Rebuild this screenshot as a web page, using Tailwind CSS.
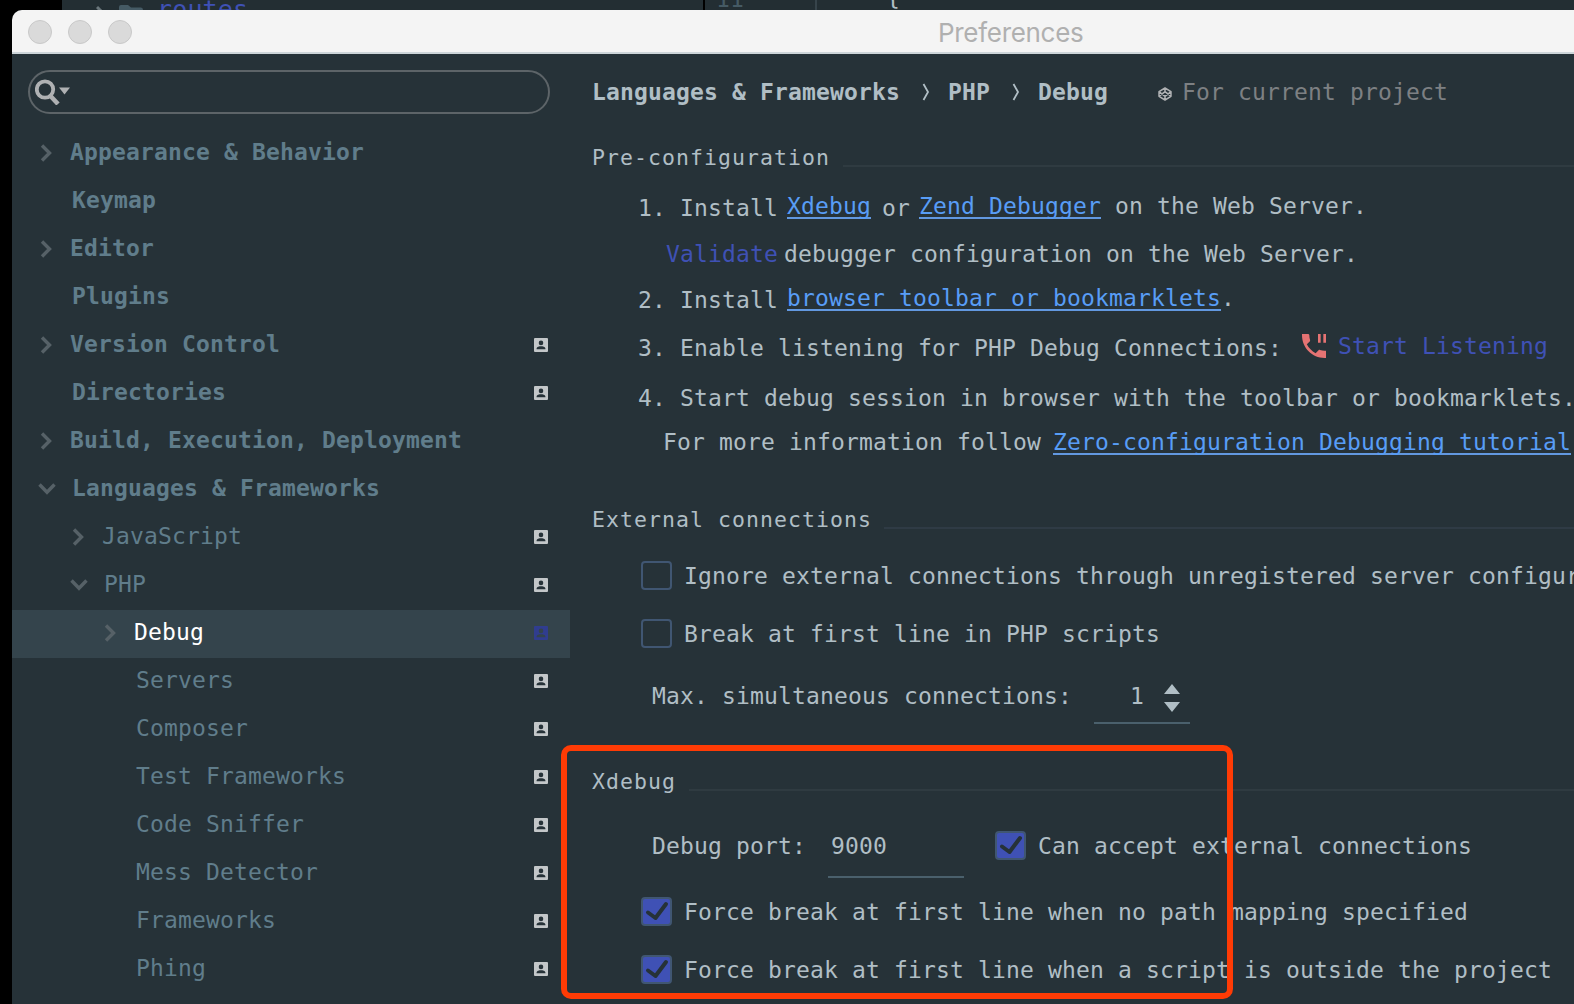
<!DOCTYPE html>
<html lang="en">
<head>
<meta charset="utf-8">
<title>Preferences</title>
<script src="https://cdn.jsdelivr.net/npm/@tailwindcss/browser@4"></script>
</head>
<body class="relative h-[1004px] w-[1574px] overflow-hidden bg-black font-['DejaVu_Sans_Mono',monospace] text-[23px] leading-7 tracking-[0.153px] text-[#b0bec5]">
<svg class="hidden">
  <symbol id="right" viewBox="0 0 12 18"><path d="M2 1.5 9.5 9 2 16.5" fill="none" stroke="#566167" stroke-width="3.4"/></symbol>
  <symbol id="down" viewBox="0 0 18 12"><path d="M1.5 1.5 9 9.3 16.5 1.5" fill="none" stroke="#566167" stroke-width="3.4"/></symbol>
  <symbol id="badge" viewBox="0 0 14 14"><path fill="currentColor" fill-rule="evenodd" d="M1 0H13Q14 0 14 1V13Q14 14 13 14H1Q0 14 0 13V1Q0 0 1 0ZM7 2.6A2.3 2.3 0 1 0 7 7.2A2.3 2.3 0 1 0 7 2.6ZM2.6 11.2H11.4V10.4C11.4 8.8 8.6 8.2 7 8.2S2.6 8.8 2.6 10.4Z"/></symbol>
  <symbol id="tick" viewBox="0 0 31 29"><rect x="1" y="1" width="29" height="27" rx="3" fill="#3f51b5" stroke="#405672" stroke-width="2"/><path d="M7 15.500 14.500 21 25 7" fill="none" stroke="#263238" stroke-width="4" stroke-linecap="round" stroke-linejoin="round"/></symbol>
</svg>

<!-- Editor behind the dialog -->
<div class="ml-[62px] flex h-[10px] overflow-hidden bg-[#232e33]">
  <svg class="ml-[34px] h-[10px] w-[50px] shrink-0" viewBox="0 0 50 10"><path d="M1 7 6 12" stroke="#6b777c" stroke-width="3"/><path d="M23 10V7Q23 5 25 5H32L35 7.500H45Q47 7.500 47 10Z" fill="#455a64"/></svg>
  <div class="-mt-[4px] ml-[11px] w-[548px] shrink-0 border-r-2 border-black text-[25px] text-[#3f51b5]">routes</div>
  <div class="-mt-[15px] ml-[11px] w-[101px] shrink-0 border-r-2 border-[#37444b] text-[#455a64]">11</div>
  <div class="-mt-[17px] ml-[69px]">{</div>
</div>

<!-- Dialog -->
<div class="ml-3 flex h-[994px] flex-col overflow-hidden rounded-tl-[10px] bg-[#263238]">
  <div class="flex h-[44px] shrink-0 items-center border-b-2 border-[#cdd5d9] bg-[#f4f4f4] pt-[2px]">
    <div class="ml-4 flex gap-4">
      <span class="size-6 rounded-full border border-[#c8c8c8] bg-[#dadada]"></span>
      <span class="size-6 rounded-full border border-[#c8c8c8] bg-[#dadada]"></span>
      <span class="size-6 rounded-full border border-[#c8c8c8] bg-[#dadada]"></span>
    </div>
    <div class="ml-[806px] mt-[2px] font-[Inter,sans-serif] text-[26px] tracking-[-0.3px] text-[#b0b0b0]">Preferences</div>
  </div>

  <div class="flex min-h-0 flex-1">
    <aside class="w-[558px] shrink-0">
      <div class="ml-4 mt-4 flex h-[44px] w-[522px] items-center rounded-[22px] border-2 border-[#5d6468] pl-[5px]">
        <svg class="h-[26px] w-9" viewBox="0 0 36 26"><circle cx="10" cy="10.500" r="8.200" fill="none" stroke="#afb1b3" stroke-width="3.800"/><path d="m15.500 17 7.500 8" stroke="#afb1b3" stroke-width="4.500"/><path d="M24 8.500H35L29.500 15.500Z" fill="#afb1b3"/></svg>
      </div>
      <nav id="tree" class="mt-4 text-[#607d8b]"></nav>
    </aside>

    <main class="flex min-w-0 flex-1 flex-col overflow-hidden whitespace-pre pl-[22px] pt-6 [&>*]:shrink-0">
      <div class="flex h-7 items-center font-bold">
        <span>Languages &amp; Frameworks</span>
        <svg class="ml-[22px] h-[18px] w-2" viewBox="0 0 8 18"><path d="M1.500 1 6 9 1.500 17" fill="none" stroke="#b0bec5" stroke-width="1.800"/></svg>
        <span class="ml-[18px]">PHP</span>
        <svg class="ml-[22px] h-[18px] w-2" viewBox="0 0 8 18"><path d="M1.500 1 6 9 1.500 17" fill="none" stroke="#b0bec5" stroke-width="1.800"/></svg>
        <span class="ml-[18px]">Debug</span>
        <svg class="ml-[50px] mt-[3px] size-[14px]" viewBox="0 0 14 14" fill="none" stroke="#afb1b3" stroke-width="1.500" stroke-linejoin="round"><path d="M7 1 13 4.700V9.300L7 13 1 9.300V4.700ZM7 1V4.700M7 9.300V13M1 4.700 7 9.300 13 4.700M1 9.300 7 4.700 13 9.300"/></svg>
        <span class="ml-[10px] font-normal text-[#7d8083]">For current project</span>
      </div>

      <div class="mt-[38px] flex h-7 text-[21.5px] tracking-[1.056px]"><span>Pre-configuration</span><i class="ml-[13px] mt-[21px] h-0.5 flex-1 bg-[#2f3b41]"></i></div>
      <div class="ml-[46px] mt-5 flex h-[30px]">
        <span class="mt-0.5 w-[149px]">1. Install</span><a class="h-[27px] border-b-2 border-[#6298e0] text-[#589df6]">Xdebug</a><span class="mt-0.5 ml-[11px] w-[37px]">or</span><a class="h-[27px] border-b-2 border-[#6298e0] text-[#589df6]">Zend Debugger</a><span> on the Web Server.</span>
      </div>
      <div class="ml-[74px] mt-[18px] flex h-7"><span class="w-[118px] text-[#3f51b5]">Validate</span><span>debugger configuration on the Web Server.</span></div>
      <div class="ml-[46px] mt-4 flex h-[30px]">
        <span class="mt-0.5 w-[149px]">2. Install</span><a class="h-[27px] border-b-2 border-[#6298e0] text-[#589df6]">browser toolbar or bookmarklets</a><span>.</span>
      </div>
      <div class="ml-[46px] mt-[18px] flex h-[30px]">
        <span class="mt-0.5 w-[664px]">3. Enable listening for PHP Debug Connections:</span>
        <svg class="mt-0.5 size-6 shrink-0" viewBox="3 3 18 18" fill="#e57373"><path d="M20 15.500c-1.250 0-2.450-.2-3.570-.57-.35-.11-.74-.03-1.020.24l-2.200 2.200c-2.830-1.440-5.150-3.750-6.590-6.590l2.200-2.200c.28-.28.36-.67.25-1.020C8.700 6.450 8.500 5.250 8.500 4c0-.55-.45-1-1-1H3v1c0 9.390 7.610 17 17 17h1v-5.500zM19 3v6.500h2V3zM15 3v6.500h2V3z"/></svg>
        <span class="ml-3 text-[#3f51b5]">Start Listening</span>
      </div>
      <div class="ml-[46px] mt-[22px] h-7">4. Start debug session in browser with the toolbar or bookmarklets.</div>
      <div class="ml-[71px] mt-4 flex h-7"><span class="w-[390px]">For more information follow</span><a class="h-[27px] border-b-2 border-[#6298e0] text-[#589df6]">Zero-configuration Debugging tutorial</a></div>

      <div class="mt-[50px] flex h-7 text-[21.5px] tracking-[1.056px]"><span>External connections</span><i class="ml-[12px] mt-[21px] h-0.5 flex-1 bg-[#2f3b45]"></i></div>
      <div class="ml-[49px] mt-[27px] flex h-[29px]"><i class="w-[31px] shrink-0 rounded-[4px] border-2 border-[#405672]"></i><span class="ml-3 mt-px">Ignore external connections through unregistered server configurations</span></div>
      <div class="ml-[49px] mt-[29px] flex h-[29px]"><i class="w-[31px] shrink-0 rounded-[4px] border-2 border-[#405672]"></i><span class="ml-3 mt-px">Break at first line in PHP scripts</span></div>
      <div class="ml-[60px] mt-[34px] flex h-[42px]">
        <span class="w-[442px]">Max. simultaneous connections:</span>
        <div class="flex w-24 border-b-2 border-[#4a606c] pl-9"><span>1</span><svg class="ml-5 mt-0.5 h-7 w-4" viewBox="0 0 16 28" fill="#b0bec5"><path d="M8 0 16 10H0ZM0 18H16L8 28Z"/></svg></div>
      </div>

      <div class="mt-[44px] flex h-7 text-[21.5px] tracking-[1.056px]"><span>Xdebug</span><i class="ml-[13px] mt-[21px] h-0.5 flex-1 bg-[#2f3b41]"></i></div>
      <div class="ml-[60px] mt-[35px] flex h-[47px]">
        <span class="mt-px w-[176px]">Debug port:</span>
        <div class="w-[136px] border-b-2 border-[#4a606c] pl-[3px] pt-px">9000</div>
        <svg class="ml-[31px] h-[29px] w-[31px]"><use href="#tick"/></svg>
        <span class="ml-3 mt-px">Can accept external connections</span>
      </div>
      <div class="ml-[49px] mt-[19px] flex h-[29px]"><svg class="h-[29px] w-[31px]"><use href="#tick"/></svg><span class="ml-3 mt-px">Force break at first line when no path mapping specified</span></div>
      <div class="ml-[49px] mt-[29px] flex h-[29px]"><svg class="h-[29px] w-[31px]"><use href="#tick"/></svg><span class="ml-3 mt-px">Force break at first line when a script is outside the project</span></div>
    </main>
  </div>
</div>

<!-- Highlight drawn over the Xdebug section -->
<div class="absolute left-[561px] top-[745px] h-[254px] w-[672px] rounded-[10px] border-[6px] border-[#ff3b05]"></div>

<script>
  // label, depth, arrow (r = collapsed, d = expanded), project badge
  const rows = [
    ['Appearance & Behavior', 0, 'r', 0], ['Keymap', 0, '', 0], ['Editor', 0, 'r', 0], ['Plugins', 0, '', 0],
    ['Version Control', 0, 'r', 1], ['Directories', 0, '', 1], ['Build, Execution, Deployment', 0, 'r', 0],
    ['Languages & Frameworks', 0, 'd', 0], ['JavaScript', 1, 'r', 1], ['PHP', 1, 'd', 1], ['Debug', 2, 'r', 1],
    ['Servers', 2, '', 1], ['Composer', 2, '', 1], ['Test Frameworks', 2, '', 1], ['Code Sniffer', 2, '', 1],
    ['Mess Detector', 2, '', 1], ['Frameworks', 2, '', 1], ['Phing', 2, '', 1]
  ];
  const pad = ['pl-[26px]', 'pl-[58px]', 'pl-[90px]'];
  document.getElementById('tree').innerHTML = rows.map(([label, depth, arrow, badge]) => {
    const selected = label === 'Debug';
    const icon = arrow === 'r' ? '<svg class="ml-[2px] h-[18px] w-3"><use href="#right"/></svg>'
      : arrow === 'd' ? '<svg class="h-3 w-[18px]"><use href="#down"/></svg>' : '';
    return `<div class="flex h-12 items-center pb-0.5 pr-[22px] ${pad[depth]} ${selected ? 'bg-[#34444c] text-white' : ''}">
      <span class="flex shrink-0 items-center ${arrow === 'r' ? 'w-8' : 'w-[34px]'}">${icon}</span>
      <span class="-mt-0.5 flex-1 whitespace-pre ${depth ? '' : 'font-bold'}">${label.replace('&', '&amp;')}</span>
      ${badge ? `<svg class="size-[14px] ${selected ? 'text-[#303d8f]' : 'text-[#c3c7c9]'}"><use href="#badge"/></svg>` : ''}
    </div>`;
  }).join('');
</script>
</body>
</html>
